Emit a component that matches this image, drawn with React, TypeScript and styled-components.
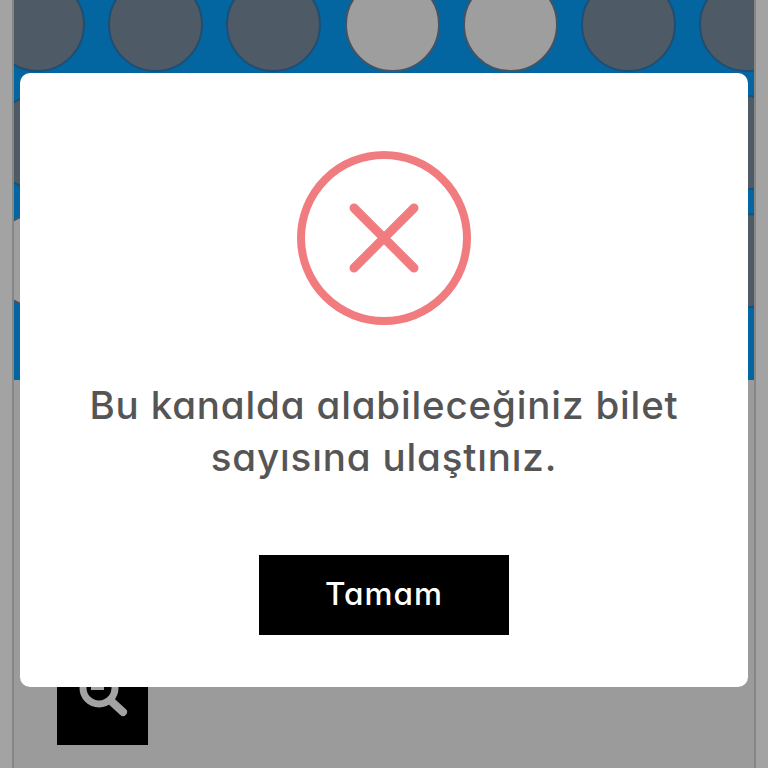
import React from 'react';
import styled, { createGlobalStyle } from 'styled-components';

type SeatProps = { isTaken: boolean };

const rows: boolean[][] = [
  [false, false, false, true, true, false, false],
  [false, false, false, false, false, false, false],
  [true, false, false, false, false, false, false]
];

const GlobalStyle = createGlobalStyle`
  html, body {
    margin: 0;
    height: 768px;
    overflow: hidden;
    background: #fff;
  }
  * {
    box-sizing: border-box;
  }
`;

const Page = styled.div`
  display: flex;
  flex-direction: column;
  height: 768px;
  margin: 0 12px;
  background: #f2f2f2;
  border-left: 2px solid #d2d2d2;
  border-right: 2px solid #d2d2d2;
`;

const SeatArea = styled.div`
  height: 380px;
  overflow: hidden;
  background: #06a0fa;
`;

const SeatRows = styled.div`
  display: flex;
  flex-direction: column;
  gap: 23px;
  margin: -23px 0 0 -24px;
`;

const SeatRow = styled.div`
  display: flex;
  gap: 23.2px;
`;

const Seat = styled.div<SeatProps>`
  flex: none;
  width: 95px;
  height: 95px;
  border-radius: 50%;
  border: 2px solid ${props => (props.isTaken === true ? '#6d8299' : '#2f7ab4')};
  background: ${props => (props.isTaken === true ? '#f8f8f8' : '#7a8d9f')};
`;

const SearchButton = styled.div`
  display: flex;
  align-items: flex-start;
  justify-content: center;
  width: 91px;
  height: 95px;
  margin: 270px 0 0 43px;
  padding-top: 17px;
  background: #000;
`;

const Overlay = styled.div`
  position: fixed;
  inset: 0;
  padding: 73px 20px 81px;
  background: rgba(0, 0, 0, 0.36);
`;

const Modal = styled.div`
  display: flex;
  flex-direction: column;
  align-items: center;
  height: 100%;
  padding-top: 78px;
  background: #fff;
  border-radius: 10px;
`;

const Message = styled.p`
  margin: 54px 0 0;
  font-family: Inter, 'Noto Sans', sans-serif;
  font-feature-settings: 'cv11' 1;
  font-size: 38.5px;
  font-weight: 500;
  line-height: 52px;
  letter-spacing: 0.85px;
  text-align: center;
  color: #555;
`;

const OkButton = styled.button`
  width: 250px;
  height: 80px;
  margin-top: 72px;
  padding: 0 0 4px;
  border: 0;
  border-radius: 0;
  background: #000;
  color: #fff;
  font-family: Inter, 'Noto Sans', sans-serif;
  font-feature-settings: 'cv11' 1;
  font-size: 31.5px;
  font-weight: 500;
  letter-spacing: 1px;
`;

const ErrorIcon = () => (
  <svg width='174' height='174' viewBox='0 0 174 174' fill='none'>
    <circle cx='87' cy='87' r='83' stroke='#f07c80' strokeWidth='8' />
    <path
      d='M57 57 L117 117 M117 57 L57 117'
      stroke='#f07c80'
      strokeWidth='9'
      strokeLinecap='round'
    />
  </svg>
);

const SearchIcon = () => (
  <svg width='52' height='52' viewBox='0 0 52 52' fill='none'>
    <circle cx='22' cy='21' r='16' stroke='#fff' strokeWidth='7' />
    <path d='M34 34 L46 45' stroke='#fff' strokeWidth='8' strokeLinecap='round' />
    <rect x='14' y='20' width='13' height='3' fill='#fff' />
  </svg>
);

export default function App() {
  return (
    <>
      <GlobalStyle />
      <Page>
        <SeatArea>
          <SeatRows>
            {rows.map((row, rowIndex) => (
              <SeatRow key={rowIndex}>
                {row.map((isTaken, seatIndex) => (
                  <Seat key={seatIndex} isTaken={isTaken} />
                ))}
              </SeatRow>
            ))}
          </SeatRows>
        </SeatArea>
        <SearchButton>
          <SearchIcon />
        </SearchButton>
      </Page>
      <Overlay>
        <Modal>
          <ErrorIcon />
          <Message>
            Bu kanalda alabileceğiniz bilet
            <br />
            sayısına ulaştınız.
          </Message>
          <OkButton>Tamam</OkButton>
        </Modal>
      </Overlay>
    </>
  );
}
